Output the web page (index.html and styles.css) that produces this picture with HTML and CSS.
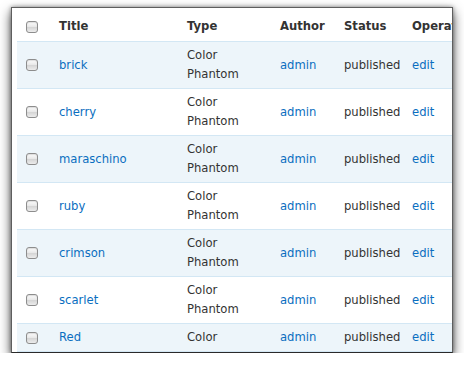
FILE: index.html
```html
<!DOCTYPE html>
<html>
<head>
<meta charset="utf-8">
<link rel="stylesheet" href="styles.css">
</head>
<body>
<div class="window">
  <table class="content-table">
    <colgroup>
      <col class="c-check"><col class="c-title"><col class="c-type"><col class="c-author"><col class="c-status"><col class="c-ops">
    </colgroup>
    <thead>
      <tr>
        <th class="check"><span class="cb"></span></th>
        <th>Title</th><th>Type</th><th>Author</th><th>Status</th><th>Operations</th>
      </tr>
    </thead>
    <tbody>
      <tr class="odd"><td class="check"><span class="cb"></span></td><td><a href="#">brick</a></td><td>Color<br>Phantom</td><td><a href="#">admin</a></td><td>published</td><td><a href="#">edit</a></td></tr>
      <tr><td class="check"><span class="cb"></span></td><td><a href="#">cherry</a></td><td>Color<br>Phantom</td><td><a href="#">admin</a></td><td>published</td><td><a href="#">edit</a></td></tr>
      <tr class="odd"><td class="check"><span class="cb"></span></td><td><a href="#">maraschino</a></td><td>Color<br>Phantom</td><td><a href="#">admin</a></td><td>published</td><td><a href="#">edit</a></td></tr>
      <tr><td class="check"><span class="cb"></span></td><td><a href="#">ruby</a></td><td>Color<br>Phantom</td><td><a href="#">admin</a></td><td>published</td><td><a href="#">edit</a></td></tr>
      <tr class="odd"><td class="check"><span class="cb"></span></td><td><a href="#">crimson</a></td><td>Color<br>Phantom</td><td><a href="#">admin</a></td><td>published</td><td><a href="#">edit</a></td></tr>
      <tr><td class="check"><span class="cb"></span></td><td><a href="#">scarlet</a></td><td>Color<br>Phantom</td><td><a href="#">admin</a></td><td>published</td><td><a href="#">edit</a></td></tr>
      <tr class="odd"><td class="check"><span class="cb"></span></td><td><a href="#">Red</a></td><td>Color</td><td><a href="#">admin</a></td><td>published</td><td><a href="#">edit</a></td></tr>
    </tbody>
  </table>
</div>
</body>
</html>
```

FILE: styles.css
```css
html, body {
  margin: 0;
  padding: 0;
  background: #fff;
}
body {
  font-family: "DejaVu Sans", Verdana, sans-serif;
  font-size: 11.6px;
  color: #333;
}
.window {
  margin: 7px 0 0 11px;
  height: 344px;
  width: 435px;
  padding-left: 5px;
  box-sizing: content-box;
  border: 1px solid #5e5e5e;
  border-bottom-color: #2a2a2a;
  background: #fff;
  overflow: hidden;
  box-shadow: 0 5px 11px rgba(0, 0, 0, 0.7), 0 0 4px rgba(0, 0, 0, 0.4);
}
.content-table {
  border-collapse: collapse;
  table-layout: fixed;
  width: 485px;
}
.c-check { width: 32px; }
.c-title { width: 128px; }
.c-type { width: 93px; }
.c-author { width: 64px; }
.c-status { width: 68px; }
.c-ops { width: 100px; }
th, td {
  text-align: left;
  padding: 4px 0 4px 10px;
  line-height: 19px;
  vertical-align: middle;
  white-space: nowrap;
  border-bottom: 1px solid #d3e7f4;
}
th {
  font-weight: bold;
  height: 28px;
  padding-top: 4px;
  padding-bottom: 1px;
  box-sizing: content-box;
  color: #333;
}
th.check, td.check {
  padding-left: 9px;
}
tr.odd td {
  background: #edf5fa;
}
a {
  color: #0a6ec0;
  text-decoration: none;
}
.cb {
  display: block;
  width: 10px;
  height: 10px;
  border: 1px solid #8d8d8d;
  border-radius: 3px;
  background: linear-gradient(#fdfdfd 0%, #e9e9e9 45%, #d6d6d6 55%, #ececec 100%);
  box-shadow: inset 0 1px 1px rgba(0, 0, 0, 0.12);
}
th .cb {
  margin-top: 1px;
}
```
